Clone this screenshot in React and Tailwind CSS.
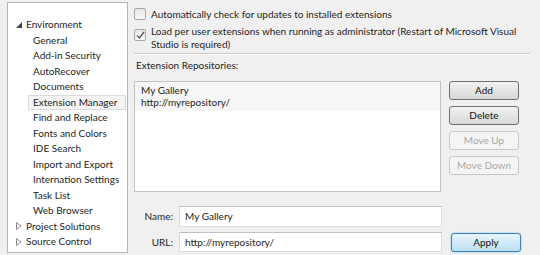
import React from "react";

const font = { fontFamily: 'Lato, "Open Sans", sans-serif' };

const envChildren = [
  "General",
  "Add-in Security",
  "AutoRecover",
  "Documents",
  "Extension Manager",
  "Find and Replace",
  "Fonts and Colors",
  "IDE Search",
  "Import and Export",
  "Internation Settings",
  "Task List",
  "Web Browser",
];

function Expanded() {
  return (
    <svg width="6" height="6" viewBox="0 0 6 6" className="shrink-0">
      <path d="M6 0 L6 6 L0 6 Z" fill="#444" />
    </svg>
  );
}

function Collapsed() {
  return (
    <svg width="6" height="8" viewBox="0 0 6 8" className="shrink-0">
      <path d="M0.5 0.5 L5 4 L0.5 7.5 Z" fill="none" stroke="#888" />
    </svg>
  );
}

function Check({ checked }) {
  return (
    <div className="w-[12px] h-[12px] border border-[#a8a8a8] rounded-[2px] bg-gradient-to-b from-[#e8e8e8] to-[#f8f8f8] flex items-center justify-center shrink-0">
      {checked && (
        <svg width="9" height="9" viewBox="0 0 9 9">
          <path d="M1 4.5 L3.5 7 L8 1" fill="none" stroke="#555" strokeWidth="1.3" />
        </svg>
      )}
    </div>
  );
}

function Button({ label, disabled, primary }) {
  return (
    <div
      className={`w-[70px] h-[19px] rounded-[3px] border flex items-center justify-center text-[10px] ${
        disabled
          ? "border-[#c8c8c8] bg-[#f4f4f4] text-[#a8a8a8]"
          : primary
          ? "border-[#3c7fb1] bg-gradient-to-b from-[#e8f4fb] to-[#bcdff3] text-[#111] shadow-[0_0_2px_#6fb8e4]"
          : "border-[#707070] bg-gradient-to-b from-[#f2f2f2] to-[#d8d8d8] text-[#111]"
      }`}
    >
      {label}
    </div>
  );
}

export default function App() {
  return (
    <div className="w-[540px] h-[255px] bg-[#f0f0f0] flex text-[#1e1e1e] overflow-hidden whitespace-nowrap" style={font}>
      <div className="ml-[7px] mt-[2px] w-[121px] h-[251px] shrink-0 bg-white border border-[#b5b5b5] pt-[14px] text-[10px] leading-[15.5px]">
        <div className="flex items-center gap-[4px] pl-[8px]">
          <Expanded />
          <span>Environment</span>
        </div>
        {envChildren.map((c) => (
          <div key={c} className="pl-[21px] pr-[2px]">
            <div
              className={`pl-[4px] ${
                c === "Extension Manager" ? "bg-[#f4f4f4] border border-[#dadada] -mx-[1px] leading-[13.5px]" : ""
              }`}
            >
              {c}
            </div>
          </div>
        ))}
        <div className="flex items-center gap-[4px] pl-[8px]">
          <Collapsed />
          <span>Project Solutions</span>
        </div>
        <div className="flex items-center gap-[4px] pl-[8px]">
          <Collapsed />
          <span>Source Control</span>
        </div>
      </div>

      <div className="flex-1 pl-[6px] pr-[10px] pt-[8px] text-[10px] leading-[13px]">
        <div className="flex gap-[5px] items-start">
          <Check />
          <span>Automatically check for updates to installed extensions</span>
        </div>
        <div className="flex gap-[5px] items-start mt-[4px]">
          <div className="mt-[4px]">
            <Check checked />
          </div>
          <span>
            Load per user extensions when running as administrator (Restart of Microsoft Visual
            <br />
            Studio is required)
          </span>
        </div>
        <div className="h-px bg-[#c8c8c8] mt-[2px] border-b border-white box-content" />

        <div className="mt-[4px] pl-[2px]">Extension Repositories:</div>

        <div className="flex gap-[8px] mt-[9px]">
          <div className="w-[307px] h-[111px] bg-white border border-[#c4c4c4]">
            <div className="bg-[#f6f6f6] pl-[6px] pt-[2px] pb-[3px] leading-[12px]">
              <div>My Gallery</div>
              <div>http://myrepository/</div>
            </div>
          </div>
          <div className="flex flex-col gap-[6px]">
            <Button label="Add" />
            <Button label="Delete" />
            <Button label="Move Up" disabled />
            <Button label="Move Down" disabled />
          </div>
        </div>

        <div className="flex items-center mt-[14px]">
          <div className="w-[39px] text-right">Name:</div>
          <div className="ml-[6px] w-[263px] h-[21px] bg-white border border-[#dcdcdc] border-t-[#c0c0c0] pl-[5px] flex items-center">
            My Gallery
          </div>
        </div>
        <div className="flex items-center mt-[5px]">
          <div className="w-[39px] text-right">URL:</div>
          <div className="ml-[6px] w-[263px] h-[20px] bg-white border border-[#dcdcdc] border-t-[#c0c0c0] pl-[5px] flex items-center">
            http://myrepository/
          </div>
          <div className="ml-[9px]">
            <Button label="Apply" primary />
          </div>
        </div>
      </div>
    </div>
  );
}
